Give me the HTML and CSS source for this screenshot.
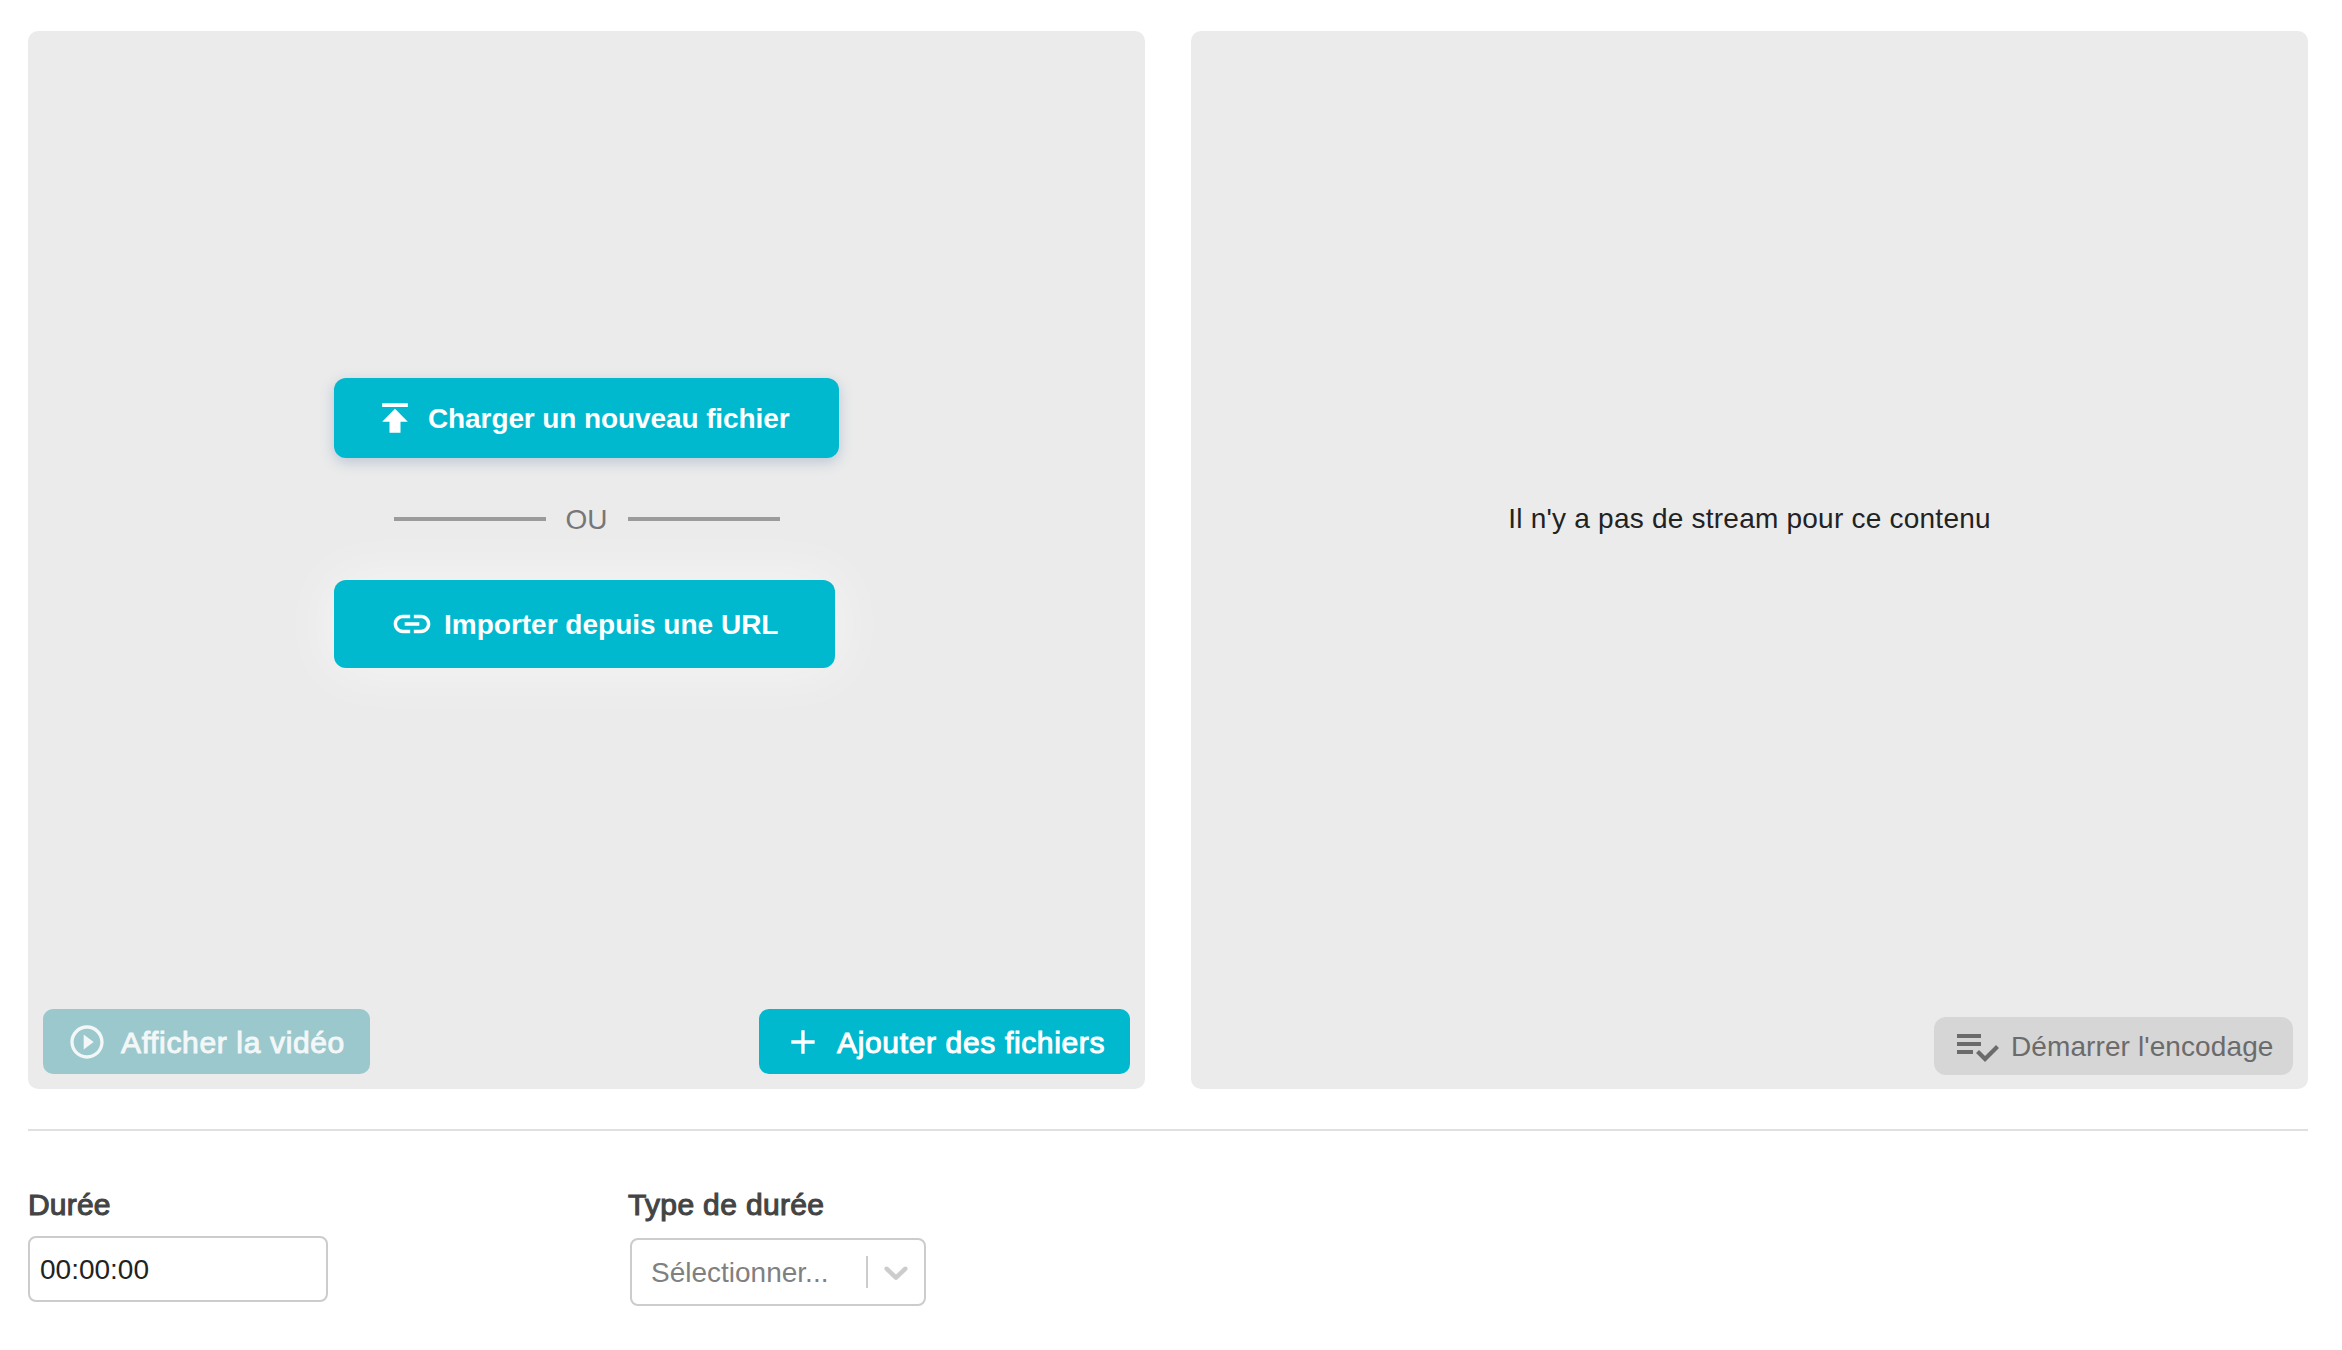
FILE: index.html
```html
<!DOCTYPE html>
<html lang="fr">
<head>
  <meta charset="UTF-8">
  <meta name="viewport" content="width=device-width, initial-scale=1">
  <title>Vidéo</title>
  <link rel="stylesheet" href="styles.css">
</head>
<body>
  <div class="panels">
    <div class="panel">
      <div class="upload">
        <button class="btn btn-upload">
          <svg width="44" height="44" viewBox="0 0 24 24"><path d="M5 4v2h14V4H5zm0 10h4v6h6v-6h4l-7-7-7 7z"/></svg>
          <span>Charger un nouveau fichier</span>
        </button>
        <div class="or"><span class="or-text">OU</span></div>
        <button class="btn btn-url">
          <svg width="44" height="44" viewBox="0 0 24 24"><path d="M3.9 12c0-1.71 1.39-3.1 3.1-3.1h4V7H7c-2.76 0-5 2.24-5 5s2.24 5 5 5h4v-1.9H7c-1.71 0-3.1-1.39-3.1-3.1zM8 13h8v-2H8v2zm9-6h-4v1.9h4c1.71 0 3.1 1.39 3.1 3.1s-1.39 3.1-3.1 3.1h-4V17h4c2.76 0 5-2.24 5-5s-2.24-5-5-5z"/></svg>
          <span>Importer depuis une URL</span>
        </button>
      </div>
      <div class="panel-footer">
        <button class="btn btn-show" disabled>
          <svg width="40" height="40" viewBox="0 0 24 24"><path d="M10 16.5l6-4.5-6-4.5v9zM12 2C6.48 2 2 6.48 2 12s4.48 10 10 10 10-4.48 10-10S17.52 2 12 2zm0 18c-4.41 0-8-3.59-8-8s3.59-8 8-8 8 3.59 8 8-3.59 8-8 8z"/></svg>
          <span>Afficher la vidéo</span>
        </button>
        <button class="btn btn-add">
          <svg width="40" height="40" viewBox="0 0 24 24"><path d="M19 13h-6v6h-2v-6H5v-2h6V5h2v6h6v2z"/></svg>
          <span>Ajouter des fichiers</span>
        </button>
      </div>
    </div>

    <div class="panel">
      <div class="empty"><span>Il n'y a pas de stream pour ce contenu</span></div>
      <div class="panel-footer panel-footer-right">
        <button class="btn btn-encode" disabled>
          <svg width="48" height="48" viewBox="0 0 24 24"><path d="M14 10H2v2h12v-2zm0-4H2v2h12V6zM2 16h8v-2H2v2zm19.5-4.5L23 13l-6.99 7-4.51-4.5L13 14l3.01 3 5.49-5.5z"/></svg>
          <span>Démarrer l'encodage</span>
        </button>
      </div>
    </div>
  </div>

  <div class="fields">
    <div class="field">
      <label class="label label-duration" for="duration">Durée</label>
      <input class="input" type="text" id="duration" value="00:00:00">
    </div>
    <div class="field">
      <div class="label label-type">Type de durée</div>
      <div class="select">
        <span class="placeholder">Sélectionner...</span>
        <span class="separator"></span>
        <svg class="chevron" width="40" height="40" viewBox="0 0 20 20"><path d="M4.516 7.548c0.436-0.446 1.043-0.481 1.576 0l3.908 3.747 3.908-3.747c0.533-0.481 1.141-0.446 1.574 0 0.436 0.445 0.408 1.197 0 1.615-0.406 0.418-4.695 4.502-4.695 4.502-0.217 0.223-0.502 0.335-0.787 0.335s-0.57-0.112-0.789-0.335c0 0-4.287-4.084-4.695-4.502s-0.436-1.17 0-1.615z"/></svg>
      </div>
    </div>
  </div>
</body>
</html>
```
FILE: styles.css
```css
* {
  box-sizing: border-box;
}

body {
  margin: 0;
  padding: 31px 34px 0 28px;
  background: #fff;
  color: #222;
  font-family: "Liberation Sans", Arial, sans-serif;
  font-size: 28px;
}

.panels {
  display: flex;
  gap: 46px;
  padding-bottom: 40px;
  border-bottom: 2px solid #e0e0e0;
}

.panel {
  display: flex;
  flex: 1;
  flex-direction: column;
  justify-content: space-between;
  height: 1058px;
  background: #ebebeb;
  border-radius: 10px;
}

/* buttons */
.btn {
  display: flex;
  align-items: center;
  padding: 0;
  border: none;
  font-family: inherit;
  font-size: 28px;
  color: #fff;
  background: #00b9cf;
  white-space: nowrap;
}

.btn svg {
  flex: none;
  fill: currentColor;
}

.btn span {
  padding-top: 2px;
}

.upload {
  width: 505px;
  margin: 347px auto 0;
}

.btn-upload {
  width: 505px;
  height: 80px;
  padding-left: 39px;
  gap: 11px;
  border-radius: 12px;
  font-weight: bold;
  letter-spacing: -0.1px;
  box-shadow: 0 4px 14px rgba(60, 100, 150, 0.28);
}

.btn-url {
  width: 501px;
  height: 88px;
  padding-left: 56px;
  gap: 10px;
  border-radius: 12px;
  font-weight: bold;
  box-shadow: 0 0 60px rgba(255, 255, 255, 0.6);
}

.or {
  display: flex;
  align-items: center;
  justify-content: center;
  gap: 20px;
  height: 122px;
  color: #777;
}

.or-text {
  padding-top: 1px;
}

.or::before,
.or::after {
  content: "";
  width: 152px;
  height: 4px;
  background: #9b9b9b;
}

.panel-footer {
  display: flex;
  justify-content: space-between;
  padding: 0 15px 15px;
}

.panel-footer-right {
  justify-content: flex-end;
  padding-bottom: 14px;
}

.btn-show,
.btn-add {
  height: 65px;
  border-radius: 10px;
  font-size: 30px;
  letter-spacing: 0.65px;
  -webkit-text-stroke: 1px currentColor;
}

.btn-show {
  width: 327px;
  padding-left: 24px;
  gap: 14px;
  color: #f3f7f8;
  background: #9bc8cc;
}

.btn-add {
  width: 371px;
  padding-left: 24px;
  gap: 14px;
}

.btn-encode {
  width: 359px;
  height: 58px;
  padding-left: 19px;
  gap: 10px;
  border-radius: 12px;
  letter-spacing: 0.1px;
  color: #6b6b6b;
  background: #d6d6d6;
}

.empty {
  display: flex;
  align-items: center;
  justify-content: center;
  height: 976px;
  letter-spacing: 0.23px;
}

/* form */
.fields {
  display: flex;
  padding-top: 56px;
}

.field {
  width: 600px;
}

.label {
  display: block;
  height: 36px;
  line-height: 36px;
  font-size: 30px;
  letter-spacing: 0.2px;
  color: #444;
  -webkit-text-stroke: 1.1px #444;
}

.label-type {
  letter-spacing: 0.35px;
}

.input {
  display: block;
  width: 300px;
  height: 66px;
  margin-top: 13px;
  padding: 2px 10px 0;
  border: 2px solid #ccc;
  border-radius: 8px;
  font-family: inherit;
  font-size: 28px;
  color: #222;
}

.select {
  display: flex;
  align-items: center;
  width: 296px;
  height: 68px;
  margin: 15px 0 0 2px;
  padding-right: 8px;
  padding-left: 19px;
  border: 2px solid #ccc;
  border-radius: 8px;
}

.placeholder {
  flex: 1;
  padding-top: 2px;
  color: #808080;
}

.separator {
  width: 2px;
  height: 32px;
  margin-right: 8px;
  background: #ccc;
}

.chevron {
  fill: #ccc;
}
```
